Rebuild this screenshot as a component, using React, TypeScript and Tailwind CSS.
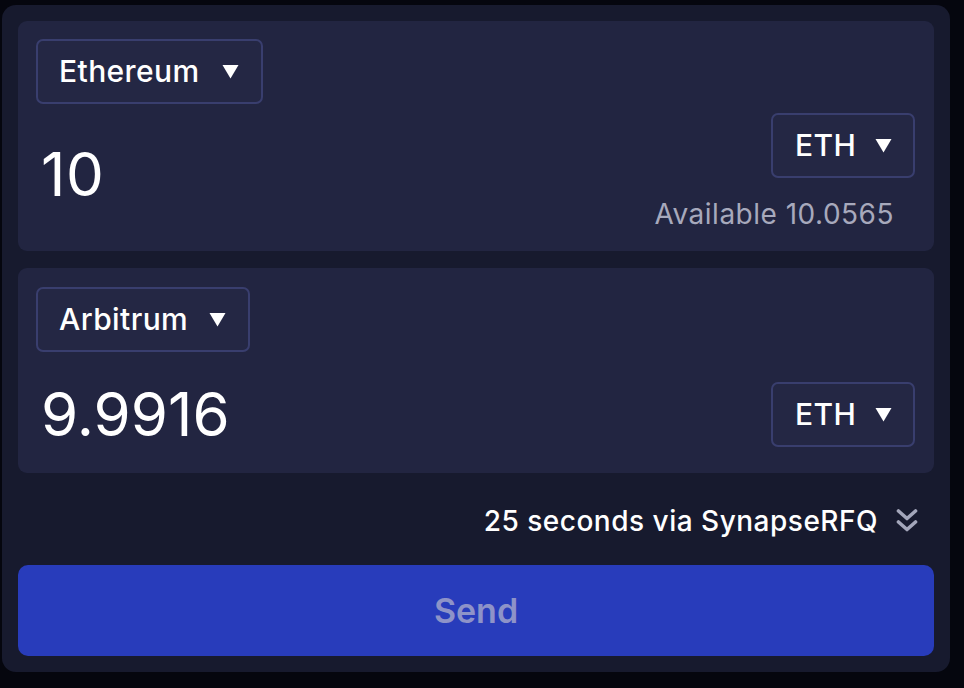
const FONT = { fontFamily: 'Inter, "Noto Sans", sans-serif' }

function Caret() {
  return (
    <svg width="17" height="15" viewBox="0 0 17 15" className="shrink-0">
      <path d="M0.5 1 H16.5 L8.5 14.5 Z" fill="white" />
    </svg>
  )
}

function DoubleChevron() {
  return (
    <svg width="22" height="26" viewBox="0 0 22 26" fill="none" className="shrink-0">
      <path
        d="M2.5 3 L11 10.5 L19.5 3 M2.5 14 L11 21.5 L19.5 14"
        stroke="#a3a6ba"
        strokeWidth="3.6"
        strokeLinecap="round"
        strokeLinejoin="round"
      />
    </svg>
  )
}

function Select({ label, w }: { label: string; w: string }) {
  return (
    <button
      className={`flex items-center justify-between h-[65px] pl-[21px] pr-[22px] rounded-[7px] border-2 border-[#393e6e] bg-[#242744] text-white text-[30px] font-medium tracking-[0.4px] ${w}`}
    >
      <span>{label}</span>
      <Caret />
    </button>
  )
}

function TokenSelect() {
  return (
    <button className="flex items-center justify-between w-[144px] h-[65px] pl-[22px] pr-[21px] rounded-[7px] border-2 border-[#393e6e] bg-[#242744] text-white text-[30px] font-medium tracking-[0.4px]">
      <span>ETH</span>
      <Caret />
    </button>
  )
}

export default function App() {
  return (
    <div className="w-[964px] h-[688px] bg-[#05060e] pt-[5px] pl-[2px]" style={FONT}>
      <div className="w-[948px] h-[667px] rounded-[14px] bg-[#171a2e] p-4 flex flex-col">
        <div className="h-[231px] rounded-[9px] bg-[#222541] pt-[18px] pl-[18px] pr-[19px]">
          <Select label="Ethereum" w="w-[227px]" />
          <div className="mt-[9px] flex items-start justify-between">
            <div className="text-white text-[60px] leading-none mt-[31px] ml-[5px] tracking-[0.5px]">10</div>
            <div className="flex flex-col items-end">
              <TokenSelect />
              <div className="mt-[20px] mr-[21px] text-[28px] leading-[32px] text-[#a7a9bc] tracking-[0.5px]">
                Available 10.0565
              </div>
            </div>
          </div>
        </div>

        <div className="mt-[17px] h-[206px] rounded-[9px] bg-[#222541] pt-[19px] pl-[18px] pr-[19px]">
          <Select label="Arbitrum" w="w-[214px]" />
          <div className="mt-[30px] flex items-center justify-between">
            <div className="text-white text-[60px] leading-none ml-[5px]">9.9916</div>
            <TokenSelect />
          </div>
        </div>

        <div className="mt-[31px] flex items-center justify-end gap-[18px] pr-[16px]">
          <span className="text-white text-[28px] font-medium leading-[34px] tracking-[0.5px]">25 seconds via SynapseRFQ</span>
          <DoubleChevron />
        </div>

        <button className="mt-[27px] h-[92px] w-full rounded-[10px] bg-[#283cbb] text-[#8e93c8] text-[34px] font-semibold">
          Send
        </button>
      </div>
    </div>
  )
}
